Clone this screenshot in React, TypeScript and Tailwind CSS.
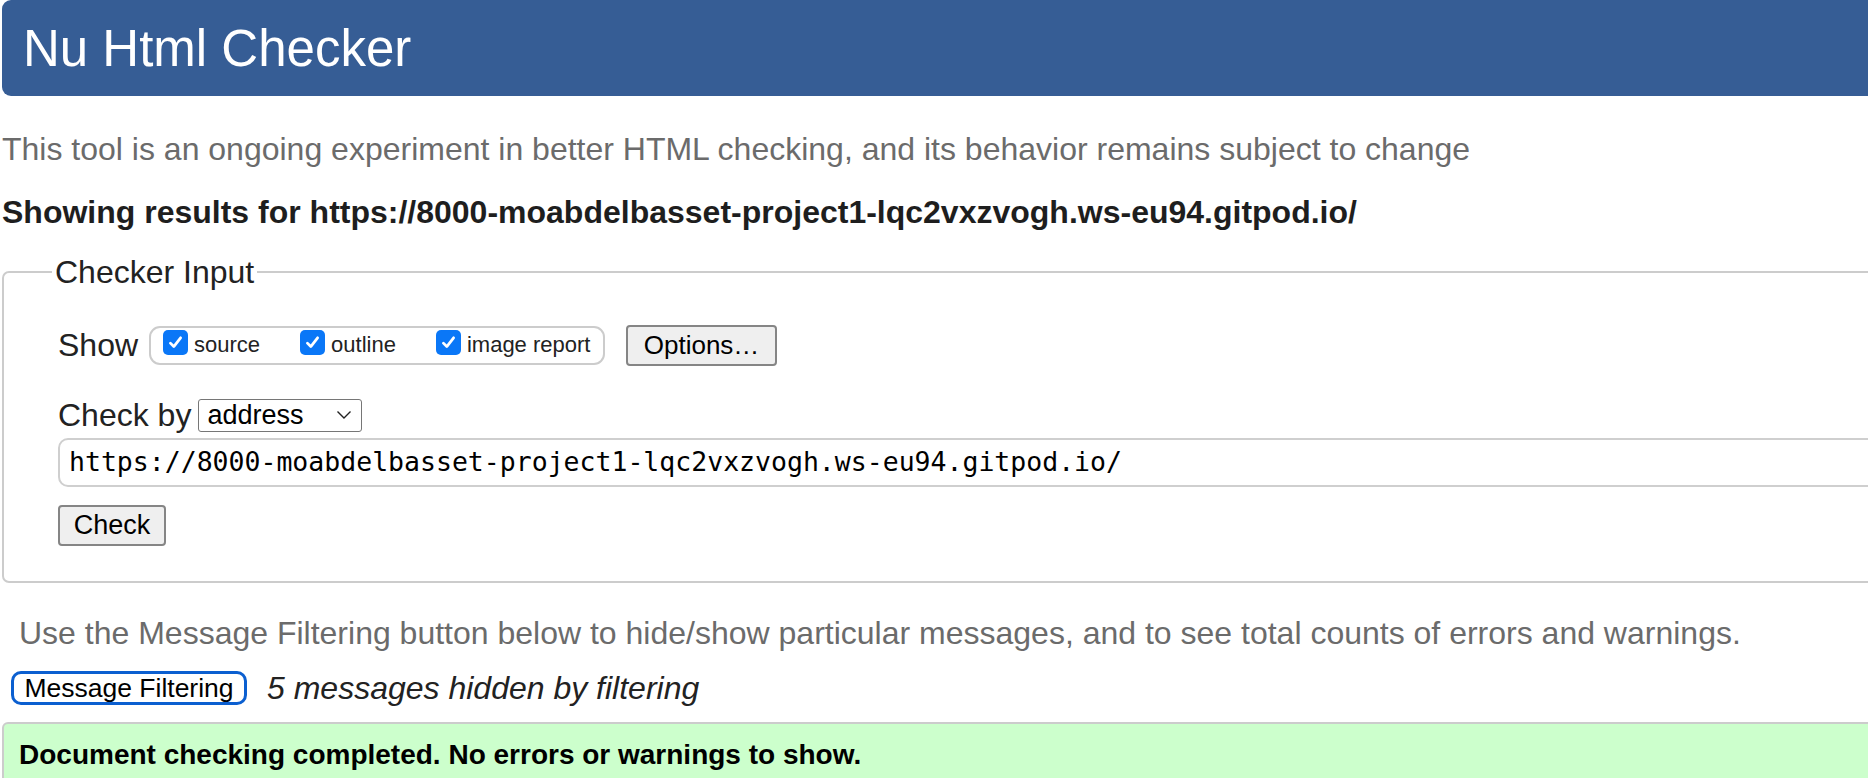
import React from 'react';

function CheckBox() {
  return (
    <span className="inline-flex h-[25px] w-[25px] shrink-0 items-center justify-center rounded-[5px] bg-[#0a77f7]">
      <svg width="17" height="17" viewBox="0 0 16 16" fill="none">
        <path d="M3.2 8.6 L6.4 11.8 L12.8 3.6" stroke="white" strokeWidth="2.6" strokeLinecap="round" strokeLinejoin="round" />
      </svg>
    </span>
  );
}

function ShowOption({ label, last }: { label: string; last?: boolean }) {
  return (
    <label className={`flex items-center gap-[6px] ${last ? '' : 'mr-[40px]'}`}>
      <span className="-mt-[3px]">
        <CheckBox />
      </span>
      <span className="text-[22px] leading-[26px] text-[#222]">{label}</span>
    </label>
  );
}

export default function App() {
  const url = 'https://8000-moabdelbasset-project1-lqc2vxzvogh.ws-eu94.gitpod.io/';

  return (
    <div className="h-[778px] w-full overflow-hidden bg-white font-['Liberation_Sans',Arial,sans-serif] text-[#222]">
      <div className="w-[1920px] pl-[2px]">
        {/* Header */}
        <div className="flex h-[96px] items-center rounded-[9px] bg-[#365d95] pl-[21px]">
          <h1 className="text-[51px] leading-none text-white">Nu Html Checker</h1>
        </div>

        <p className="mt-[35px] h-[36px] text-[32px] leading-[36px] text-[#6b6b6b]">
          This tool is an ongoing experiment in better HTML checking, and its behavior remains subject to change
        </p>

        <p className="mt-[27px] h-[36px] text-[32px] font-bold leading-[36px] text-[#1e1e1e]">
          Showing results for {url}
        </p>

        {/* Checker Input */}
        <fieldset className="mt-[24px] rounded-[7px] border-2 border-[#cccccc] pb-[35px] pl-[54px]">
          <legend className="-ml-[6px] px-[3px] text-[32px] leading-[36px]">Checker Input</legend>

          <div className="mt-[34px] flex h-[42px] items-center">
            <span className="text-[32px] leading-[36px]">Show</span>
            <div className="ml-[11px] flex h-[39px] w-[456px] items-center rounded-[11px] border-2 border-[#cccccc] pl-[12px]">
              <ShowOption label="source" />
              <ShowOption label="outline" />
              <ShowOption label="image report" last />
            </div>
            <button className="ml-[21px] h-[41px] w-[151px] rounded-[4px] border-2 border-[#858585] bg-[#efefef] text-[26px] leading-none text-black">
              Options…
            </button>
          </div>

          <div className="mt-[32px] flex h-[34px] items-center">
            <span className="text-[32px] leading-[36px]">Check by</span>
            <div className="ml-[7px] flex h-[33px] w-[164px] items-center justify-between rounded-[3px] border border-[#767676] bg-white pl-[8px] pr-[9px]">
              <span className="text-[27px] leading-none text-black">address</span>
              <svg width="16" height="10" viewBox="0 0 16 10" fill="none">
                <path d="M1.5 1.5 L8 8 L14.5 1.5" stroke="#222" strokeWidth="1.4" />
              </svg>
            </div>
          </div>

          <div className="mt-[6px] flex h-[49px] items-center rounded-[10px] border-2 border-[#cfcfcf] pl-[9px]">
            <span className="font-['DejaVu_Sans_Mono',monospace] text-[26.5px] leading-none text-black">{url}</span>
          </div>

          <button className="mt-[18px] block h-[41px] w-[108px] rounded-[4px] border-2 border-[#858585] bg-[#efefef] text-[27px] leading-none text-black">
            Check
          </button>
        </fieldset>

        <p className="mt-[32px] h-[36px] pl-[17px] text-[32px] leading-[36px] text-[#6b6b6b]">
          Use the Message Filtering button below to hide/show particular messages, and to see total counts of errors and warnings.
        </p>

        <div className="mt-[19px] flex h-[36px] items-center pl-[9px]">
          <button className="h-[34px] w-[236px] rounded-[10px] border-[3px] border-[#0b5fd0] bg-white text-[26.5px] leading-none text-black">
            Message Filtering
          </button>
          <span className="ml-[20px] text-[32px] italic leading-[36px] text-[#222]">5 messages hidden by filtering</span>
        </div>

        {/* Result */}
        <div className="mt-[16px] h-[100px] rounded-[6px] border-2 border-[#cccccc] bg-[#ccffcc] pl-[15px] pt-[15px]">
          <p className="text-[28px] font-bold leading-[32px] text-black">
            Document checking completed. No errors or warnings to show.
          </p>
        </div>
      </div>
    </div>
  );
}
